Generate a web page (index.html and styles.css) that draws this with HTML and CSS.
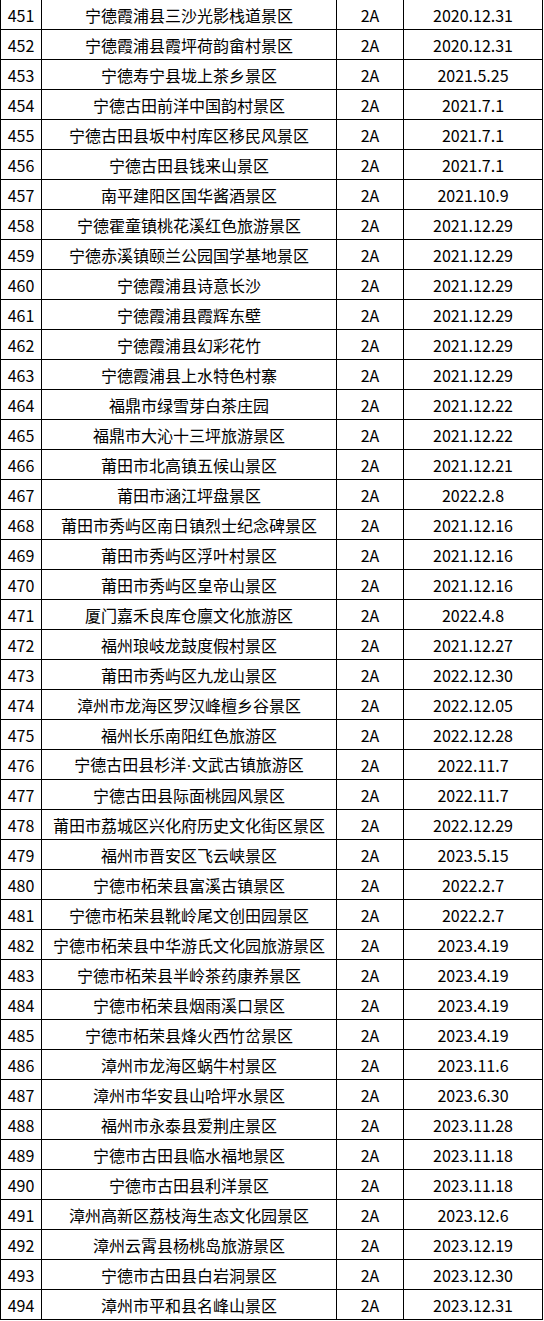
FILE: index.html
```html
<!DOCTYPE html>
<html lang="zh">
<head>
<meta charset="utf-8">
<link rel="stylesheet" href="styles.css">
</head>
<body>
<table class="list">
<colgroup><col class="c-no"><col class="c-name"><col class="c-lv"><col class="c-date"></colgroup>
<tbody>
<tr><td>451</td><td>宁德霞浦县三沙光影栈道景区</td><td>2A</td><td>2020.12.31</td></tr>
<tr><td>452</td><td>宁德霞浦县霞坪荷韵畲村景区</td><td>2A</td><td>2020.12.31</td></tr>
<tr><td>453</td><td>宁德寿宁县垅上茶乡景区</td><td>2A</td><td>2021.5.25</td></tr>
<tr><td>454</td><td>宁德古田前洋中国韵村景区</td><td>2A</td><td>2021.7.1</td></tr>
<tr><td>455</td><td>宁德古田县坂中村库区移民风景区</td><td>2A</td><td>2021.7.1</td></tr>
<tr><td>456</td><td>宁德古田县钱来山景区</td><td>2A</td><td>2021.7.1</td></tr>
<tr><td>457</td><td>南平建阳区国华酱酒景区</td><td>2A</td><td>2021.10.9</td></tr>
<tr><td>458</td><td>宁德霍童镇桃花溪红色旅游景区</td><td>2A</td><td>2021.12.29</td></tr>
<tr><td>459</td><td>宁德赤溪镇颐兰公园国学基地景区</td><td>2A</td><td>2021.12.29</td></tr>
<tr><td>460</td><td>宁德霞浦县诗意长沙</td><td>2A</td><td>2021.12.29</td></tr>
<tr><td>461</td><td>宁德霞浦县霞辉东壁</td><td>2A</td><td>2021.12.29</td></tr>
<tr><td>462</td><td>宁德霞浦县幻彩花竹</td><td>2A</td><td>2021.12.29</td></tr>
<tr><td>463</td><td>宁德霞浦县上水特色村寨</td><td>2A</td><td>2021.12.29</td></tr>
<tr><td>464</td><td>福鼎市绿雪芽白茶庄园</td><td>2A</td><td>2021.12.22</td></tr>
<tr><td>465</td><td>福鼎市大沁十三坪旅游景区</td><td>2A</td><td>2021.12.22</td></tr>
<tr><td>466</td><td>莆田市北高镇五候山景区</td><td>2A</td><td>2021.12.21</td></tr>
<tr><td>467</td><td>莆田市涵江坪盘景区</td><td>2A</td><td>2022.2.8</td></tr>
<tr><td>468</td><td>莆田市秀屿区南日镇烈士纪念碑景区</td><td>2A</td><td>2021.12.16</td></tr>
<tr><td>469</td><td>莆田市秀屿区浮叶村景区</td><td>2A</td><td>2021.12.16</td></tr>
<tr><td>470</td><td>莆田市秀屿区皇帝山景区</td><td>2A</td><td>2021.12.16</td></tr>
<tr><td>471</td><td>厦门嘉禾良库仓廪文化旅游区</td><td>2A</td><td>2022.4.8</td></tr>
<tr><td>472</td><td>福州琅岐龙鼓度假村景区</td><td>2A</td><td>2021.12.27</td></tr>
<tr><td>473</td><td>莆田市秀屿区九龙山景区</td><td>2A</td><td>2022.12.30</td></tr>
<tr><td>474</td><td>漳州市龙海区罗汉峰檀乡谷景区</td><td>2A</td><td>2022.12.05</td></tr>
<tr><td>475</td><td>福州长乐南阳红色旅游区</td><td>2A</td><td>2022.12.28</td></tr>
<tr><td>476</td><td>宁德古田县杉洋<span class="dot">·</span>文武古镇旅游区</td><td>2A</td><td>2022.11.7</td></tr>
<tr><td>477</td><td>宁德古田县际面桃园风景区</td><td>2A</td><td>2022.11.7</td></tr>
<tr><td>478</td><td>莆田市荔城区兴化府历史文化街区景区</td><td>2A</td><td>2022.12.29</td></tr>
<tr><td>479</td><td>福州市晋安区飞云峡景区</td><td>2A</td><td>2023.5.15</td></tr>
<tr><td>480</td><td>宁德市柘荣县富溪古镇景区</td><td>2A</td><td>2022.2.7</td></tr>
<tr><td>481</td><td>宁德市柘荣县靴岭尾文创田园景区</td><td>2A</td><td>2022.2.7</td></tr>
<tr><td>482</td><td>宁德市柘荣县中华游氏文化园旅游景区</td><td>2A</td><td>2023.4.19</td></tr>
<tr><td>483</td><td>宁德市柘荣县半岭茶药康养景区</td><td>2A</td><td>2023.4.19</td></tr>
<tr><td>484</td><td>宁德市柘荣县烟雨溪口景区</td><td>2A</td><td>2023.4.19</td></tr>
<tr><td>485</td><td>宁德市柘荣县烽火西竹岔景区</td><td>2A</td><td>2023.4.19</td></tr>
<tr><td>486</td><td>漳州市龙海区蜗牛村景区</td><td>2A</td><td>2023.11.6</td></tr>
<tr><td>487</td><td>漳州市华安县山哈坪水景区</td><td>2A</td><td>2023.6.30</td></tr>
<tr><td>488</td><td>福州市永泰县爱荆庄景区</td><td>2A</td><td>2023.11.28</td></tr>
<tr><td>489</td><td>宁德市古田县临水福地景区</td><td>2A</td><td>2023.11.18</td></tr>
<tr><td>490</td><td>宁德市古田县利洋景区</td><td>2A</td><td>2023.11.18</td></tr>
<tr><td>491</td><td>漳州高新区荔枝海生态文化园景区</td><td>2A</td><td>2023.12.6</td></tr>
<tr><td>492</td><td>漳州云霄县杨桃岛旅游景区</td><td>2A</td><td>2023.12.19</td></tr>
<tr><td>493</td><td>宁德市古田县白岩洞景区</td><td>2A</td><td>2023.12.30</td></tr>
<tr><td>494</td><td>漳州市平和县名峰山景区</td><td>2A</td><td>2023.12.31</td></tr>
</tbody>
</table>
</body>
</html>
```

FILE: styles.css
```css
html, body {
  margin: 0;
  padding: 0;
  background: #ffffff;
}

body {
  font-family: "Noto Sans CJK SC", "Noto Sans", sans-serif;
  font-size: 16px;
  color: #000000;
}

.list {
  margin-top: -1px;
  border-collapse: separate;
  border-spacing: 0;
  table-layout: fixed;
  width: 543px;
  border-top: 1px solid #000;
}

.c-no { width: 41px; }
.c-name { width: 295px; }
.c-lv { width: 67px; }
.c-date { width: 140px; }

.list td {
  height: 29px;
  padding: 0;
  border-left: 1px solid #000;
  border-bottom: 1px solid #000;
  text-align: center;
  vertical-align: middle;
  line-height: 20px;
  white-space: nowrap;
  box-sizing: content-box;
}

.list td:last-child {
  border-right: 1px solid #000;
}

.dot {
  font-family: "Liberation Sans", sans-serif;
}
```
